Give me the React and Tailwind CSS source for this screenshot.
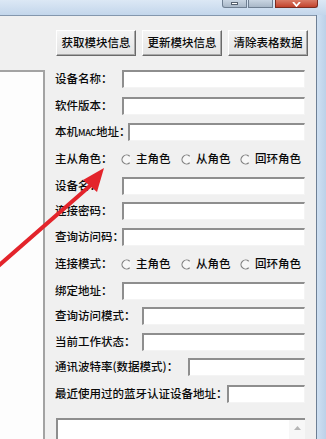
import React from "react";

function Radio({ label, w }) {
  return (
    <div className={`flex items-center gap-[4px] shrink-0 ${w}`}>
      <svg width="11" height="11" viewBox="0 0 11 11" className="shrink-0">
        <circle cx="5.5" cy="5.5" r="4.5" fill="#f7f7f7" />
        <path d="M8.7 2.3 A4.5 4.5 0 1 0 8.7 8.7" stroke="#7d7d7d" strokeWidth="1.2" fill="none" />
      </svg>
      <span className="whitespace-nowrap leading-none">{label}</span>
    </div>
  );
}

function Field({ label, lw, h }) {
  return (
    <div className={`flex items-start shrink-0 ${h}`}>
      <div className="flex items-center h-[18px] w-full">
        <span className={`shrink-0 whitespace-nowrap leading-none ${lw}`}>{label}</span>
        <div className="flex-1 h-[18px] bg-white border-t-2 border-l-2 border-t-[#8e8e8e] border-l-[#8e8e8e] border-b border-r border-b-[#f4f4f4] border-r-[#f4f4f4]" />
      </div>
    </div>
  );
}

function RadioRow({ label, h }) {
  return (
    <div className={`flex items-start shrink-0 ${h}`}>
      <div className="flex items-center h-[18px] w-full">
        <span className="shrink-0 whitespace-nowrap leading-none w-[66px]">{label}</span>
        <Radio label="主角色" w="w-[60px]" />
        <Radio label="从角色" w="w-[59px]" />
        <Radio label="回环角色" w="" />
      </div>
    </div>
  );
}

function Btn({ children }) {
  return (
    <div className="w-[80px] h-[26px] flex items-center justify-center bg-gradient-to-b from-[#f4f4f4] to-[#e4e4e4] border border-t-white border-l-white border-b-[#6a6a6a] border-r-[#6a6a6a] shadow-[inset_-1px_-1px_0_#a9a9a9] whitespace-nowrap leading-none">
      {children}
    </div>
  );
}

export default function App() {
  return (
    <div className="relative w-[326px] h-[439px] overflow-hidden bg-[#c8daee] font-['Noto_Sans_CJK_SC',sans-serif] font-medium text-[11.5px] text-[#0a0a0a]">
      {/* title bar */}
      <div className="h-[15px] bg-gradient-to-b from-[#dce8f5] to-[#c3d6eb] flex justify-end items-start pr-[8px]">
        <div className="flex items-start gap-[1px]">
          <div className="w-[25px] h-[8px] rounded-bl-[3px] border border-t-0 border-[#6f7f92] bg-gradient-to-b from-[#c9d5e2] to-[#a9b8c8] flex items-center justify-center">
            <div className="w-[7px] h-[3px] bg-white border border-[#55606e]" />
          </div>
          <div className="w-[25px] h-[8px] border border-t-0 border-[#6f7f92] bg-gradient-to-b from-[#c9d5e2] to-[#a9b8c8]" />
          <div className="ml-[1px] w-[43px] h-[8px] rounded-br-[3px] border border-t-0 border-[#7a2b1f] bg-gradient-to-b from-[#d97a66] to-[#c2422c] flex items-end justify-center">
            <svg width="9" height="5" viewBox="0 0 9 5">
              <path d="M1 0 L4.5 4 L8 0" stroke="white" strokeWidth="1.8" fill="none" />
            </svg>
          </div>
        </div>
      </div>

      <div className="flex h-[424px]">
        {/* client area */}
        <div className="w-[316px] shrink-0 bg-[#f0f0f0] border-t border-[#8497ad] flex flex-col">
          <div className="pt-[14px] pl-[56px] flex gap-[6px]">
            <Btn>获取模块信息</Btn>
            <Btn>更新模块信息</Btn>
            <Btn>清除表格数据</Btn>
          </div>

          <div className="mt-[14px] flex flex-1">
            <div className="w-[45px] shrink-0 bg-[#fdfdfd] border-t-2 border-r-2 border-[#a3a3a3]" />
            <div className="ml-[10px] w-[250px] flex flex-col">
              <Field label="设备名称：" lw="w-[67px]" h="h-[27px]" />
              <Field label="软件版本：" lw="w-[67px]" h="h-[26px]" />
              <Field
                label={
                  <>
                    本机<span className="text-[9px] tracking-[-0.3px]">MAC</span>地址：
                  </>
                }
                lw="w-[73px]"
                h="h-[27px]"
              />
              <RadioRow label="主从角色：" h="h-[27px]" />
              <Field label="设备名：" lw="w-[67px]" h="h-[25px]" />
              <Field label="连接密码：" lw="w-[67px]" h="h-[26px]" />
              <Field label="查询访问码：" lw="w-[67px]" h="h-[27px]" />
              <RadioRow label="连接模式：" h="h-[27px]" />
              <Field label="绑定地址：" lw="w-[67px]" h="h-[25px]" />
              <Field label="查询访问模式：" lw="w-[87px]" h="h-[26px]" />
              <Field label="当前工作状态：" lw="w-[87px]" h="h-[25px]" />
              <Field label="通讯波特率(数据模式)：" lw="w-[133px]" h="h-[27px]" />
              <Field label="最近使用过的蓝牙认证设备地址：" lw="w-[172px]" h="h-[33px]" />
              <div className="ml-[1px] h-[30px] flex bg-white border-t-2 border-l-2 border-t-[#8e8e8e] border-l-[#8e8e8e]">
                <div className="flex-1" />
                <div className="w-[16px] bg-[#f7f7f7] flex justify-center pt-[6px]">
                  <svg width="7" height="4" viewBox="0 0 7 4">
                    <polygon points="3.5,0 7,4 0,4" fill="#b5b5b5" />
                  </svg>
                </div>
              </div>
            </div>
          </div>
        </div>
        {/* right frame */}
        <div className="flex-1 border-l border-[#6d7f95] bg-gradient-to-r from-[#cfe0f2] to-[#bcd1e8]" />
      </div>

      {/* red annotation arrow */}
      <svg className="absolute left-0 top-0 pointer-events-none" width="326" height="439" viewBox="0 0 326 439">
        <line x1="-4" y1="268" x2="91" y2="185" stroke="#e3242b" strokeWidth="4" strokeLinecap="round" />
        <polygon points="104,168 83,180 97,192" fill="#e3242b" />
      </svg>
    </div>
  );
}
